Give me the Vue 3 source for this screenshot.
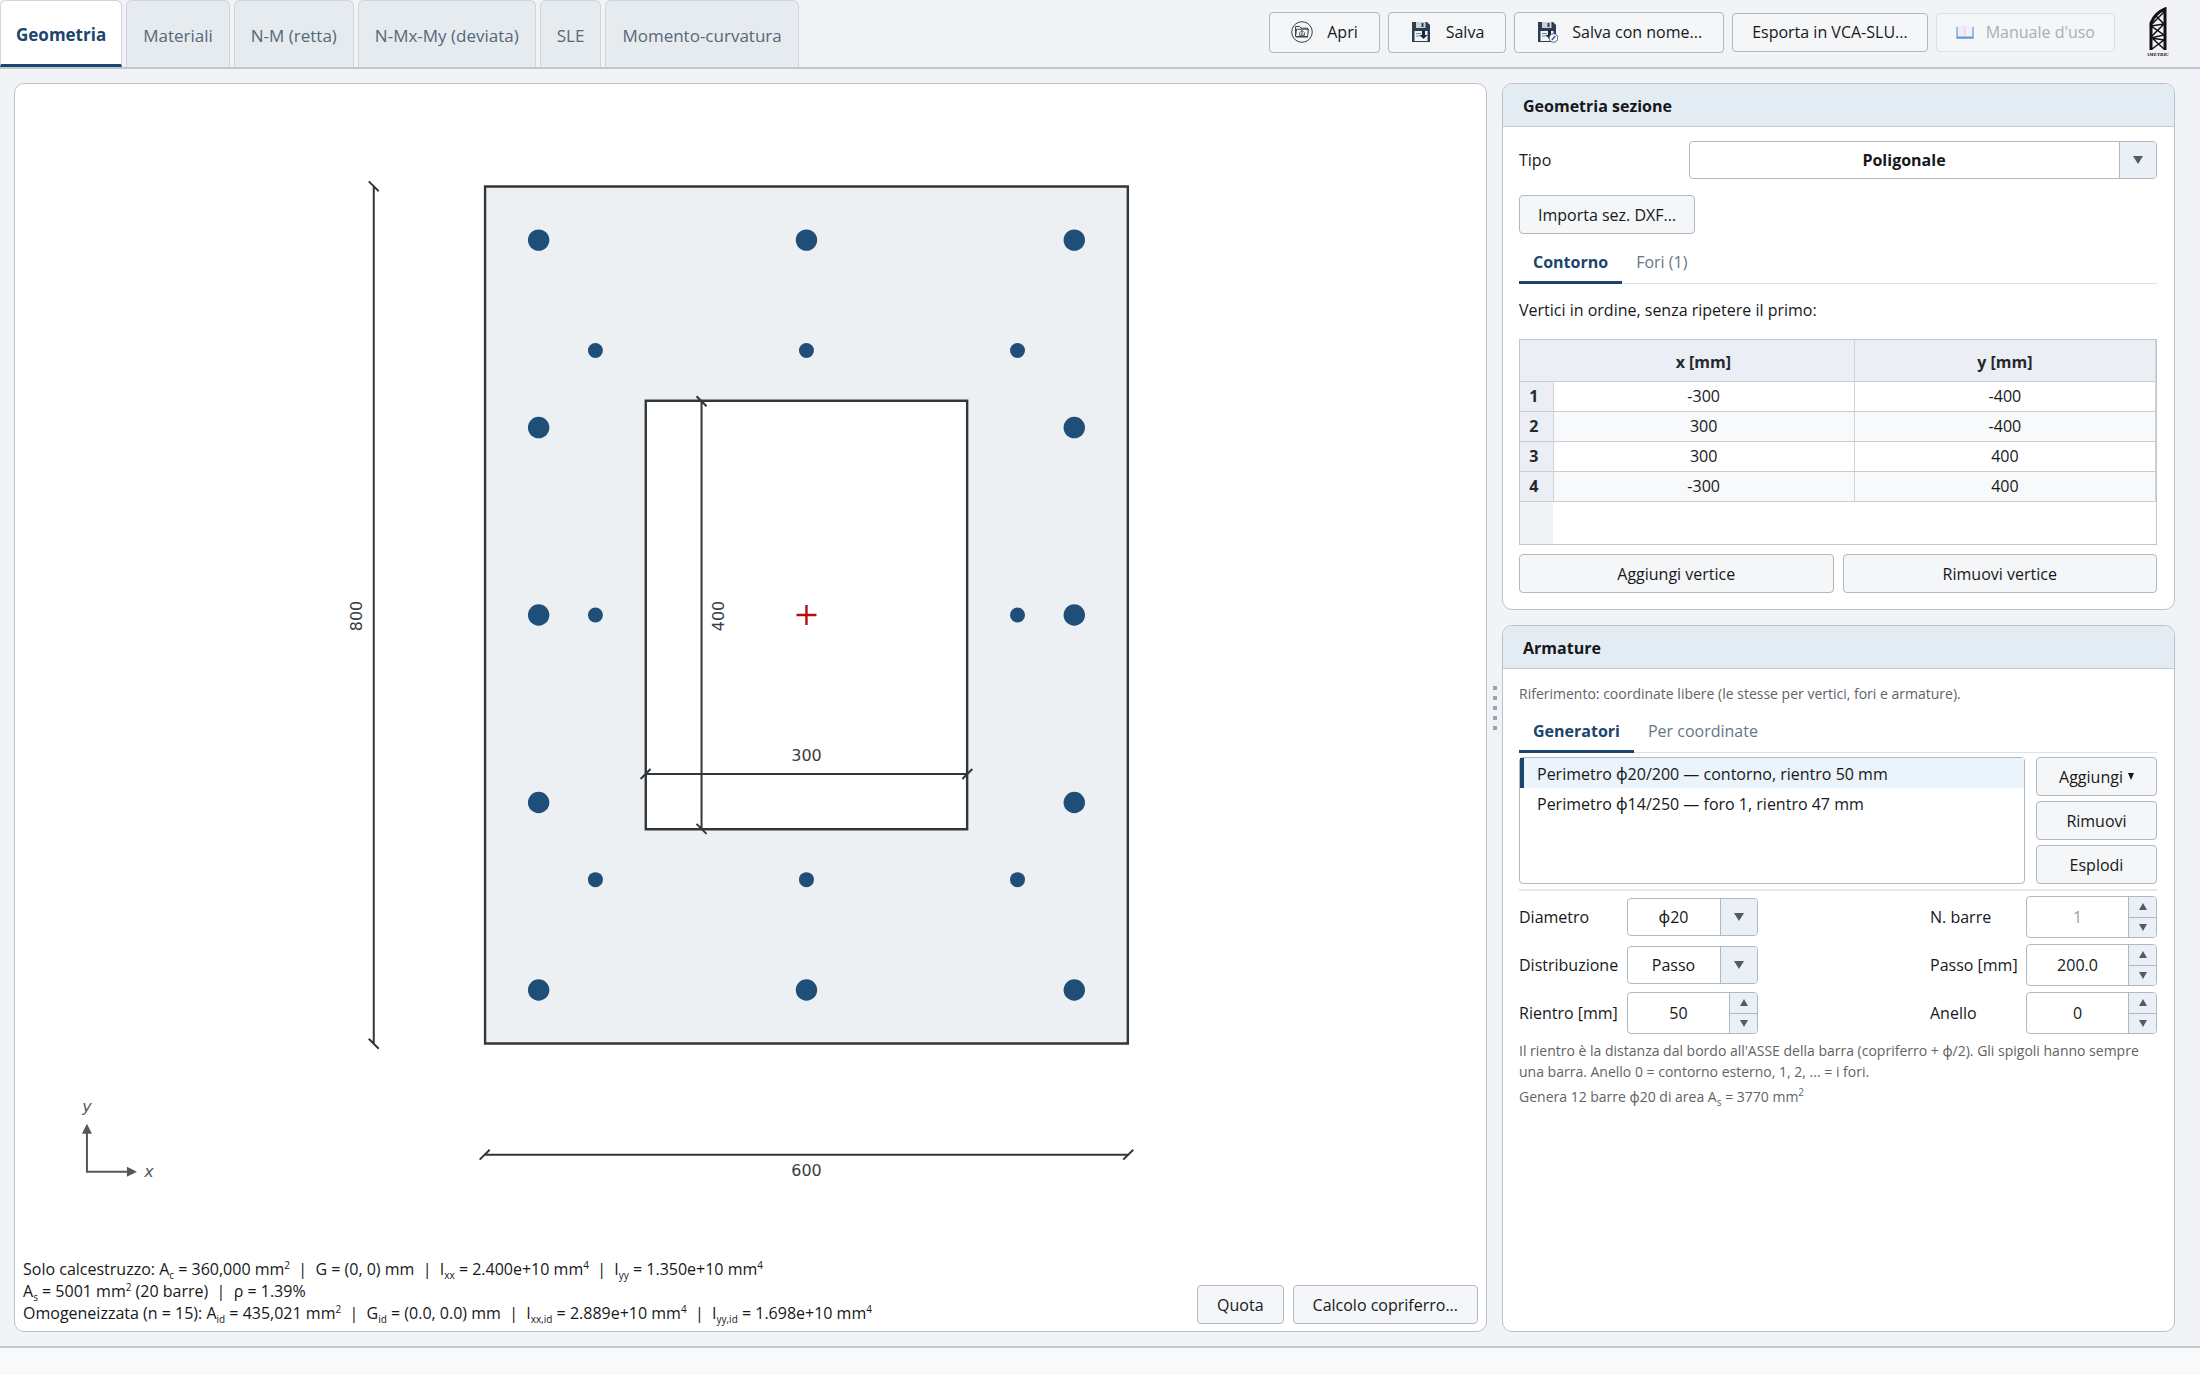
<script setup>
import { ref } from 'vue'

const tabs = ['Geometria', 'Materiali', 'N-M (retta)', 'N-Mx-My (deviata)', 'SLE', 'Momento-curvatura']
const activeTab = ref('Geometria')
const tipo = ref('Poligonale')
const vertices = ref([[-300, -400], [300, -400], [300, 400], [-300, 400]])
const generators = [
  'Perimetro ϕ20/200 — contorno, rientro 50 mm',
  'Perimetro ϕ14/250 — foro 1, rientro 47 mm',
]
const selected = ref(0)
const diametro = ref('ϕ20')
const distribuzione = ref('Passo')

// Drawing scale, px per mm
const k = 1.072
const bars = [
  ...[-350, -175, 0, 175, 350].flatMap((y) => [[-250, y, 10], [250, y, 10]]),
  [0, -350, 10], [0, 350, 10],
  ...[-247, 0, 247].flatMap((y) => [[-197, y, 7], [197, y, 7]]),
  [0, -247, 7], [0, 247, 7],
]
</script>

<template>
  <div class="app">
    <header class="topbar">
      <nav class="tabs" aria-label="Sezioni">
        <button v-for="t in tabs" :key="t" type="button" class="tab" :class="{ active: t === activeTab }" @click="activeTab = t">{{ t }}</button>
      </nav>
      <div class="actions">
        <button type="button" class="btn tall">
          <svg class="ico" viewBox="0 0 22 22" fill="none" stroke="#3f4246">
            <circle cx="11" cy="11" r="10.3" />
            <path d="M4.5 15.5V5.5h4l1.5 1.7h6.5v2M4.5 15.5l1-7.3h12l-1 7.3zM5 16h12" />
            <path d="M11 14V9.6M9.2 11.2L11 9.4l1.8 1.8M8.6 11.5v2.8h4.8v-2.8" stroke-width="0.9" />
          </svg>
          Apri
        </button>
        <button type="button" class="btn tall">
          <svg class="ico" viewBox="0 0 22 22">
            <path d="M2 1h15l3 3v17H2z" fill="#2d3e50" />
            <rect x="6" y="1" width="9.500" height="6" fill="#c9d2da" /><rect x="11.500" y="2" width="2" height="4" fill="#2d3e50" />
            <path d="M4.500 10h13v10h-13z" fill="#f1f4f6" />
            <path d="M6 12.500h5M6 15h4" stroke="#7b8791" />
            <path d="M12 9h3v5h2.500L13.500 18 9.500 14H12z" fill="#14283c" />
          </svg>
          Salva
        </button>
        <button type="button" class="btn tall">
          <svg class="ico" viewBox="0 0 22 22">
            <path d="M2 1h15l3 3v17H2z" fill="#2d3e50" />
            <rect x="6" y="1" width="9.500" height="6" fill="#c9d2da" /><rect x="11.500" y="2" width="2" height="4" fill="#2d3e50" />
            <path d="M4.500 10h13v10h-13z" fill="#f1f4f6" />
            <path d="M6 12.500h5M6 15h4" stroke="#7b8791" />
            <path d="M12 9h3v5h2.500L13.500 18 9.500 14H12z" fill="#14283c" />
            <circle cx="17.500" cy="17" r="4.300" fill="#fff" stroke="#44658c" />
            <path d="M15.800 18.900l3.500-3.800" stroke="#2f5f96" stroke-width="1.500" />
          </svg>
          Salva con nome...
        </button>
        <button type="button" class="btn">Esporta in VCA-SLU...</button>
        <button type="button" class="btn" disabled>
          <svg class="book" viewBox="0 0 18 18">
            <path d="M1 4v11h16V4" fill="none" stroke="#7fb1e0" stroke-width="1.600" />
            <path d="M2 3h7v10H2z" fill="#f0ecf7" /><path d="M9 3h7v10H9z" fill="#f6effa" />
            <path d="M9 3v10" stroke="#e2c8ea" />
            <path d="M1 14.500h16" stroke="#5c9bd8" stroke-width="2" />
          </svg>
          Manuale d'uso
        </button>
        <svg class="logo" viewBox="0 0 22 50">
          <path d="M4 43V16Q8 6 18 2v41" fill="none" stroke="#111" stroke-width="3" />
          <path d="M8 8l9 9-13 2 13 9-13 3 13 2L5 42M17 5L5 17M17 17L4 30l13 12" fill="none" stroke="#111" stroke-width="1.500" />
          <text x="11" y="49" text-anchor="middle">AMETRIC'</text>
        </svg>
      </div>
    </header>

    <main class="work">
      <section class="card canvas">
        <svg class="drawing" viewBox="-792 -530 1472 1172">
          <g fill="none" stroke="#333638" stroke-width="2">
            <path :d="`M${-300 * k} ${-400 * k}h${600 * k}v${800 * k}h${-600 * k}z`" fill="#ecf0f3" stroke-width="2.400" />
            <path :d="`M${-150 * k} ${-200 * k}h${300 * k}v${400 * k}h${-300 * k}z`" fill="#fff" stroke-width="2.400" />
            <path d="M-433 -429V429M-438 -434l10 10M-438 424l10 10" />
            <path d="M-105 -214V214M-110 -219l10 10M-110 209l10 10" />
            <path d="M-161 159H161M-166 164l10 -10M156 164l10 -10" />
            <path d="M-322 540H322M-327 545l10 -10M317 545l10 -10" />
          </g>
          <g fill="#1f4e79">
            <circle v-for="([x, y, r], i) in bars" :key="i" :cx="x * k" :cy="y * k" :r="r * k" />
          </g>
          <path d="M-10 0H10M0 -10V10" stroke="#b30d12" stroke-width="2.400" />
          <g class="dim">
            <text x="0" y="146">300</text>
            <text x="0" y="561">600</text>
            <text transform="translate(-445 1) rotate(-90)">800</text>
            <text transform="translate(-83 1) rotate(-90)">400</text>
          </g>
          <g class="axes">
            <path d="M-720 518V557H-680" fill="none" stroke="#55585b" stroke-width="2" />
            <path d="M-720 509l5 10h-10zM-670 557l-10 -5v10z" fill="#55585b" />
            <text x="-720" y="497">y</text>
            <text x="-658" y="562">x</text>
          </g>
        </svg>
        <div class="canvas-foot">
          <div class="stats">
            <p>Solo calcestruzzo: A<sub>c</sub> = 360,000 mm<sup>2</sup>&nbsp; |&nbsp; G = (0, 0) mm&nbsp; |&nbsp; I<sub>xx</sub> = 2.400e+10 mm<sup>4</sup>&nbsp; |&nbsp; I<sub>yy</sub> = 1.350e+10 mm<sup>4</sup></p>
            <p>A<sub>s</sub> = 5001 mm<sup>2</sup> (20 barre)&nbsp; |&nbsp; ρ = 1.39%</p>
            <p>Omogeneizzata (n = 15): A<sub>id</sub> = 435,021 mm<sup>2</sup>&nbsp; |&nbsp; G<sub>id</sub> = (0.0, 0.0) mm&nbsp; |&nbsp; I<sub>xx,id</sub> = 2.889e+10 mm<sup>4</sup>&nbsp; |&nbsp; I<sub>yy,id</sub> = 1.698e+10 mm<sup>4</sup></p>
          </div>
          <div class="foot-btns">
            <button type="button" class="btn">Quota</button>
            <button type="button" class="btn">Calcolo copriferro...</button>
          </div>
        </div>
      </section>

      <div class="splitter" role="separator"><i v-for="n in 5" :key="n"></i></div>

      <div class="side">
        <section class="card">
          <h2>Geometria sezione</h2>
          <div class="body">
            <div class="tipo">
              <label for="tipo">Tipo</label>
              <span class="combo strong">
                <select id="tipo" v-model="tipo"><option>Poligonale</option></select>
                <span class="arrow"><i class="tri down big"></i></span>
              </span>
            </div>
            <button type="button" class="btn import">Importa sez. DXF...</button>
            <div class="subtabs first">
              <button type="button" class="active">Contorno</button>
              <button type="button">Fori (1)</button>
            </div>
            <p class="note">Vertici in ordine, senza ripetere il primo:</p>
            <div class="grid">
              <table>
                <thead>
                  <tr><th class="idx"></th><th>x [mm]</th><th>y [mm]</th></tr>
                </thead>
                <tbody>
                  <tr v-for="(v, i) in vertices" :key="i">
                    <th class="idx">{{ i + 1 }}</th><td>{{ v[0] }}</td><td>{{ v[1] }}</td>
                  </tr>
                </tbody>
              </table>
              <div class="filler"></div>
            </div>
            <div class="pair">
              <button type="button" class="btn">Aggiungi vertice</button>
              <button type="button" class="btn">Rimuovi vertice</button>
            </div>
          </div>
        </section>

        <section class="card grow">
          <h2>Armature</h2>
          <div class="body">
            <p class="hint ref">Riferimento: coordinate libere (le stesse per vertici, fori e armature).</p>
            <div class="subtabs">
              <button type="button" class="active">Generatori</button>
              <button type="button">Per coordinate</button>
            </div>
            <div class="gen">
              <ul class="list">
                <li v-for="(g, i) in generators" :key="g" :class="{ sel: i === selected }" @click="selected = i">{{ g }}</li>
              </ul>
              <div class="gen-btns">
                <button type="button" class="btn">Aggiungi <i class="tri down ink"></i></button>
                <button type="button" class="btn">Rimuovi</button>
                <button type="button" class="btn">Esplodi</button>
              </div>
            </div>
            <hr />
            <div class="form">
              <label for="dia">Diametro</label>
              <span class="combo">
                <select id="dia" v-model="diametro"><option>ϕ20</option></select>
                <span class="arrow"><i class="tri down big"></i></span>
              </span>
              <label for="nb" class="right">N. barre</label>
              <span class="spin">
                <input id="nb" type="text" value="1" disabled />
                <span class="steps"><button type="button" aria-label="Più"><i class="tri up"></i></button><button type="button" aria-label="Meno"><i class="tri down"></i></button></span>
              </span>
              <label for="dist">Distribuzione</label>
              <span class="combo">
                <select id="dist" v-model="distribuzione"><option>Passo</option></select>
                <span class="arrow"><i class="tri down big"></i></span>
              </span>
              <label for="passo" class="right">Passo [mm]</label>
              <span class="spin">
                <input id="passo" type="text" value="200.0" />
                <span class="steps"><button type="button" aria-label="Più"><i class="tri up"></i></button><button type="button" aria-label="Meno"><i class="tri down"></i></button></span>
              </span>
              <label for="rientro">Rientro [mm]</label>
              <span class="spin">
                <input id="rientro" type="text" value="50" />
                <span class="steps"><button type="button" aria-label="Più"><i class="tri up"></i></button><button type="button" aria-label="Meno"><i class="tri down"></i></button></span>
              </span>
              <label for="anello" class="right">Anello</label>
              <span class="spin">
                <input id="anello" type="text" value="0" />
                <span class="steps"><button type="button" aria-label="Più"><i class="tri up"></i></button><button type="button" aria-label="Meno"><i class="tri down"></i></button></span>
              </span>
            </div>
            <p class="hint">Il rientro è la distanza dal bordo all'ASSE della barra (copriferro + ϕ/2). Gli spigoli hanno sempre<br />una barra. Anello 0 = contorno esterno, 1, 2, ... = i fori.</p>
            <p class="hint last">Genera 12 barre ϕ20 di area A<sub>s</sub> = 3770 mm<sup>2</sup></p>
          </div>
        </section>
      </div>
    </main>
    <footer class="status"></footer>
  </div>
</template>

<style>
body { margin: 0; background: #f1f3f6; }
</style>

<style scoped>
* { box-sizing: border-box; }
.app {
  display: flex; flex-direction: column; min-height: 100vh;
  font-family: "Open Sans", "Noto Sans", "DejaVu Sans", sans-serif;
  font-size: 16px; line-height: 22px; color: #16181a; background: #f1f3f6;
}
button, input, select { font: inherit; color: inherit; margin: 0; }
p, h2, ul { margin: 0; padding: 0; }
sub, sup { font-size: 10px; line-height: 0; }

.topbar { display: flex; justify-content: space-between; height: 69px; border-bottom: 2px solid #c0c7ce; }
.tabs { display: flex; gap: 4px; }
.tab {
  padding: 4px 16px 0; height: 67px; border: 1px solid #cfd5db; border-bottom: 0;
  border-radius: 6px 6px 0 0; background: #e6ebef; color: #566878; font-size: 17px; white-space: nowrap;
}
.tab.active { padding: 4px 15px 0; background: #fff; color: #1b456d; font-weight: 700; border-bottom: 3px solid #1b456d; }
.actions { display: flex; align-items: center; gap: 8px; height: 64px; padding-right: 31px; }
.btn {
  display: inline-flex; align-items: center; justify-content: center; height: 39px; padding: 0 19px;
  border: 1px solid #b0b8c1; border-radius: 4px; background: #f4f6f8; white-space: nowrap;
}
.btn.tall { height: 41px; padding: 0 21px; }
.btn:disabled { color: #a7afb6; border-color: #dce0e5; }
.ico { width: 22px; height: 22px; margin-right: 14px; }
.book { width: 18px; height: 18px; margin-right: 12px; }
.logo { width: 22px; height: 50px; margin-left: 24px; }
.logo text { font: italic bold 5px "Liberation Serif", serif; fill: #111; }

.work { flex: 1; display: grid; grid-template-columns: minmax(0, 1fr) 15px 673px; padding: 14px 25px 14px 14px; }
.card { background: #fff; border: 1px solid #b9c3ce; border-radius: 10px; overflow: hidden; }
.canvas { display: flex; flex-direction: column; }
.drawing { display: block; width: 100%; flex: 1; min-height: 0; }
.dim text { font: 16px "DejaVu Sans", sans-serif; fill: #3a3d40; text-anchor: middle; }
.axes text { font: italic 16px "DejaVu Sans", sans-serif; fill: #55585b; text-anchor: middle; }
.canvas-foot { display: flex; justify-content: space-between; align-items: flex-end; padding: 0 8px 7px; }
.stats { white-space: nowrap; }
.foot-btns { display: flex; gap: 9px; }
.splitter { display: flex; flex-direction: column; align-items: center; justify-content: center; gap: 6px; }
.splitter i { width: 4px; height: 4px; background: #9aa5b1; }

.side { display: flex; flex-direction: column; gap: 15px; }
.grow { flex: 1; }
h2 { height: 43px; padding: 0 20px; border-bottom: 1px solid #bfcad4; background: #e3ebf3; font-size: 16px; line-height: 44px; font-weight: 700; }
.body { padding: 0 17px 16px 16px; }
.tipo { display: grid; grid-template-columns: 170px 1fr; align-items: center; margin-top: 14px; }
.import { margin-top: 16px; padding: 0 18px; }
.combo { position: relative; display: block; height: 38px; }
.combo select {
  appearance: none; width: 100%; height: 100%; padding: 0 38px 0 0; border: 1px solid #b0b8c1;
  border-radius: 4px; background: #fff; text-align-last: center;
}
.strong select { font-weight: 700; }
.arrow {
  position: absolute; inset: 1px 1px 1px auto; width: 37px; display: grid; place-items: center;
  border-left: 1px solid #b0b8c1; border-radius: 0 3px 3px 0; background: #ebf0f6; pointer-events: none;
}
.tri { display: inline-block; border: 4px solid transparent; }
.tri.down { border-top: 7px solid #4f5d69; border-bottom: 0; }
.tri.up { border-bottom: 7px solid #4f5d69; border-top: 0; }
.tri.big { border-left-width: 5px; border-right-width: 5px; border-top-width: 8px; }
.tri.ink { border-left-width: 3px; border-right-width: 3px; border-top-color: #16181a; margin-left: 5px; }

.subtabs { display: flex; height: 38px; border-bottom: 1px solid #dde2e6; }
.subtabs.first { margin-top: 12px; }
.subtabs button { height: 38px; padding: 0 14px 3px; border: 0; border-bottom: 3px solid transparent; background: none; color: #667786; }
.subtabs button.active { color: #1b456d; font-weight: 700; border-bottom-color: #1b456d; }
.note { margin: 15px 0 18px; }
.grid { height: 206px; border: 1px solid #c0c6cb; display: flex; flex-direction: column; }
table { width: 100%; table-layout: fixed; border-collapse: collapse; text-align: center; }
th, td { height: 30px; padding: 0; border-right: 1px solid #d0d4d8; border-bottom: 1px solid #c8cdd1; }
thead th { height: 41px; padding-top: 3px; background: #ebeff5; }
th { font-weight: 700; color: #26292c; }
.idx { width: 33px; background: #ebeff5; padding-right: 5px; }
thead .idx { border-right: 0; }
tbody tr:nth-child(even) td { background: #f7f9fb; }
.filler { flex: 1; width: 33px; background: #f1f3f6; }
.pair { display: grid; grid-template-columns: 1fr 1fr; gap: 9px; margin-top: 9px; }

.hint { font-size: 14px; line-height: 21px; color: #5f6366; white-space: nowrap; }
.ref { padding: 14px 0 11px; }
.last { margin-top: 4px; }
.gen { display: grid; grid-template-columns: 1fr 121px; gap: 11px; margin-top: 4px; }
.list { list-style: none; border: 1px solid #b0b8c1; border-radius: 4px; }
.list li { height: 30px; padding-left: 13px; line-height: 32px; border-left: 4px solid transparent; }
.list li.sel { background: #ebf3fb; border-left-color: #1b456d; }
.gen-btns { display: grid; gap: 5px; }
.gen-btns .btn { padding: 0; }
hr { margin: 5px 0; border: 0; border-top: 2px solid #e6e9ec; }
.form { display: grid; grid-template-columns: 108px 131px 1fr 131px; row-gap: 6px; align-items: center; }
.right { width: 96px; justify-self: end; }
.spin { display: flex; height: 42px; border: 1px solid #b0b8c1; border-radius: 4px; overflow: hidden; background: #fff; }
.spin input { flex: 1; min-width: 0; border: 0; padding: 0; background: none; text-align: center; }
.spin input:disabled { color: #9a9ea2; }
.steps { display: grid; width: 28px; border-left: 1px solid #b0b8c1; }
.steps button { display: grid; place-items: center; padding: 0; border: 0; background: #ebf0f6; }
.steps button + button { border-top: 1px solid #b0b8c1; }
.form + .hint { margin-top: 6px; }

.status { height: 29px; border-top: 2px solid #c0c7ce; background: #f7f9fb; }
</style>
